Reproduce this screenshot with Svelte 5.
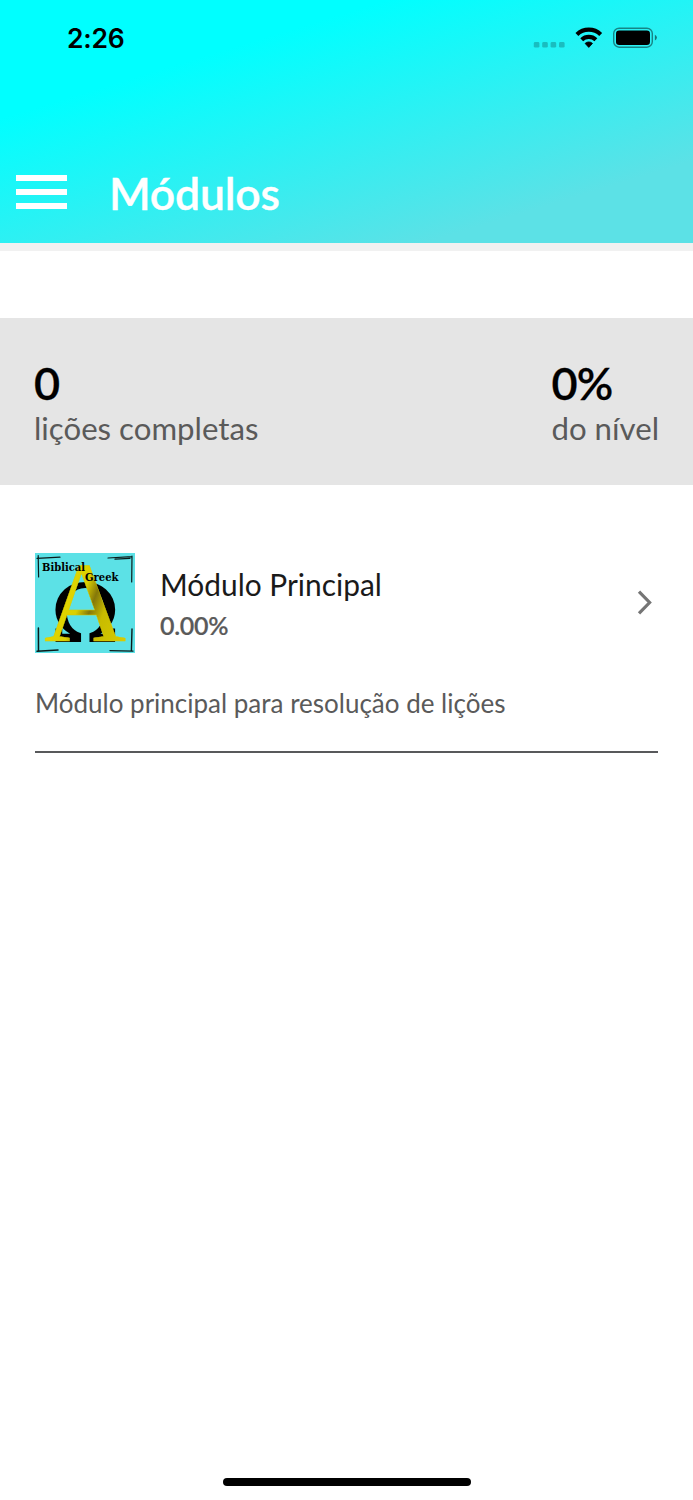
<script lang="ts">
	export let time = '2:26';
	export let title = 'Módulos';
	export let completed = 0;
	export let levelPercent = 0;

	const modules = [
		{
			name: 'Módulo Principal',
			progress: 0,
			description: 'Módulo principal para resolução de lições'
		}
	];
</script>

<div class="screen">
	<header>
		<div class="status">
			<span class="time">{time}</span>
			<svg class="indicators" width="126" height="24" viewBox="0 0 126 24">
				<g opacity="0.22">
					<rect x="1.8" y="16" width="5.6" height="5.6" rx="1.4" />
					<rect x="10.2" y="16" width="5.6" height="5.6" rx="1.4" />
					<rect x="18.6" y="16" width="5.6" height="5.6" rx="1.4" />
					<rect x="27" y="16" width="5.6" height="5.6" rx="1.4" />
				</g>
				<g fill="none" stroke="#000" stroke-width="4.2">
					<path d="M44.9 8.4a17.3 17.3 0 0 1 23.8 0" />
					<path d="M49.7 13.7a10.4 10.4 0 0 1 14.2 0" />
				</g>
				<path d="M53.1 17.4a5.4 5.4 0 0 1 7.4 0L56.8 21.4z" stroke="#000" stroke-width=".8" stroke-linejoin="round" />
				<rect x="81.7" y="2.2" width="38.6" height="19" rx="5.4" fill="none" stroke="#000" stroke-opacity="0.45" stroke-width="1.4" />
				<rect x="84" y="4.5" width="34" height="14.4" rx="3.2" />
				<path d="M122.9 8.7q2 .8 2 2.9t-2 2.9z" opacity="0.5" />
			</svg>
		</div>
		<div class="bar">
			<div class="menu">
				<i></i>
				<i></i>
				<i></i>
			</div>
			<h1>{title}</h1>
		</div>
	</header>

	<section class="stats">
		<div>
			<strong>{completed}</strong>
			<span>lições completas</span>
		</div>
		<div>
			<strong>{levelPercent}%</strong>
			<span>do nível</span>
		</div>
	</section>

	<main>
		{#each modules as module}
			<article>
				<div class="row">
					<svg class="logo" width="100" height="100" viewBox="0 0 100 100">
						<defs>
							<linearGradient id="gold" x1="0" y1="0.2" x2="1" y2="0.8">
								<stop offset="0" stop-color="#e8e000" />
								<stop offset="0.45" stop-color="#dcd000" />
								<stop offset="0.57" stop-color="#85780a" />
								<stop offset="0.7" stop-color="#c8bb00" />
								<stop offset="1" stop-color="#d8cc00" />
							</linearGradient>
						</defs>
						<rect width="100" height="100" fill="#5ce1e6" />
						<g fill="none" stroke="#0a1a1a" stroke-linecap="round">
							<path d="M2 5.3L25 4.2M3.2 2.5L3.6 24" stroke-width="1.2" />
							<path d="M73 5L97 3.6M80 6.2l15-.8M97 3l-.3 26" stroke-width="1.2" />
							<path d="M3.4 75L3.5 98M2 98.3l21-1.2" stroke-width="1.5" />
							<path d="M97 76L96.4 98M75 97.6l23 .5" stroke-width="1.4" />
						</g>
						<text class="omega" x="16.5" y="87.5" textLength="67.5" lengthAdjust="spacingAndGlyphs">Ω</text>
						<text class="alpha" x="9" y="88.4" textLength="82" lengthAdjust="spacingAndGlyphs" fill="url(#gold)">A</text>
						<text class="word" x="7" y="18" textLength="43" lengthAdjust="spacingAndGlyphs">Biblical</text>
						<text class="word" x="50" y="27.5" textLength="33.5" lengthAdjust="spacingAndGlyphs">Greek</text>
					</svg>
					<div class="info">
						<h2>{module.name}</h2>
						<span>{module.progress.toFixed(2)}%</span>
					</div>
					<svg class="chevron" width="18" height="26" viewBox="0 0 18 26">
						<path d="M3 1.7L13.6 12.5L3 23.3" fill="none" stroke="#757575" stroke-width="3.2" />
					</svg>
				</div>
				<p>{module.description}</p>
			</article>
		{/each}
	</main>

	<div class="home"></div>
</div>

<style>
	:global(body) {
		margin: 0;
		background: #fff;
	}
	.screen {
		display: flex;
		flex-direction: column;
		box-sizing: border-box;
		height: 1500px;
		padding-bottom: 14px;
		font-family: Lato, sans-serif;
		color: #000;
	}
	header {
		box-sizing: border-box;
		height: 251px;
		border-bottom: 8px solid #f1f1f1;
		background: linear-gradient(163deg, #00ffff 26%, #5ce1e6 82%) no-repeat;
		background-origin: padding-box;
		background-clip: padding-box;
	}
	.status {
		display: flex;
		justify-content: space-between;
		align-items: center;
		height: 76px;
		padding: 0 35px 0 67px;
	}
	.time {
		font: 600 26.5px/34px Inter, sans-serif;
		letter-spacing: -0.2px;
	}
	.bar {
		display: flex;
		align-items: center;
		gap: 42px;
		height: 53px;
		margin-top: 90px;
		padding-left: 16px;
	}
	.menu {
		display: flex;
		flex-direction: column;
		gap: 8px;
		width: 51px;
		margin-top: -1px;
	}
	.menu i {
		height: 6px;
		background: #fff;
	}
	h1 {
		margin: 0;
		font-size: 44.5px;
		font-weight: 600;
		line-height: 53px;
		letter-spacing: -0.2px;
		color: #fff;
		-webkit-text-stroke: 0.4px #fff;
	}
	.stats {
		display: flex;
		justify-content: space-between;
		box-sizing: border-box;
		height: 167px;
		margin-top: 67.4px;
		padding: 38px 34px 0;
		background: #e5e5e5;
	}
	.stats strong,
	.stats span {
		display: block;
	}
	.stats strong {
		font-size: 45px;
		font-weight: 600;
		line-height: 54px;
		letter-spacing: -0.8px;
		-webkit-text-stroke: 0.3px #000;
	}
	.stats span {
		font-size: 31.2px;
		line-height: 37px;
		color: #5a5a5a;
	}
	main {
		flex: 1;
		padding: 68px 35px 0;
	}
	article {
		border-bottom: 2px solid #58595b;
	}
	.row {
		display: flex;
		align-items: center;
	}
	.info {
		flex: 1;
		margin-left: 25px;
	}
	h2 {
		margin: 0 0 8px;
		font-size: 29.9px;
		font-weight: 400;
		line-height: 36px;
		color: #1a1a1a;
	}
	.info span {
		display: block;
		font-size: 25px;
		font-weight: 600;
		line-height: 30px;
		letter-spacing: -0.3px;
		color: #5a5a5a;
		-webkit-text-stroke: 0.2px #5a5a5a;
	}
	.chevron {
		margin-right: 4px;
	}
	p {
		margin: 33.5px 0 32.5px;
		font-size: 26px;
		line-height: 32px;
		color: #5a5a5a;
	}
	.logo text {
		font-family: 'Liberation Serif', serif;
	}
	.logo .omega {
		font-family: 'DejaVu Serif', serif;
		font-size: 78px;
		stroke: #000;
		stroke-width: 2px;
	}
	.logo .alpha {
		font-size: 115px;
		stroke: #d8cc00;
		stroke-width: 0.4px;
	}
	.logo .word {
		font-family: 'DejaVu Serif', serif;
		font-size: 11.5px;
		font-weight: 700;
	}
	.home {
		align-self: center;
		width: 248px;
		height: 8px;
		border-radius: 4px;
		background: #000;
	}
</style>
